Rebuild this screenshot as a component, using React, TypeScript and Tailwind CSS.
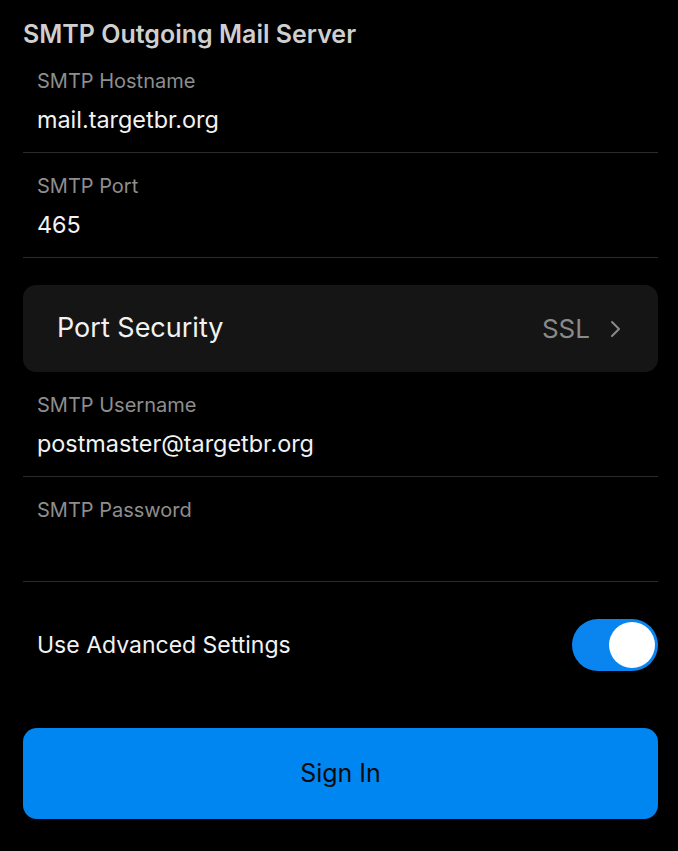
import { useState } from "react";

function Field({ label, value }: { label: string; value?: string }) {
  return (
    <div className="border-b border-[#2b2b2b] px-[14px] pt-[21px] pb-[18px]">
      <div className="text-[20px] leading-[24px] text-[#8e8e8e]">{label}</div>
      <div className="mt-[13px] h-[28px] text-[23.4px] leading-[28px] text-[#f2f2f2]">{value}</div>
    </div>
  );
}

export default function App() {
  const [advanced, setAdvanced] = useState(true);

  return (
    <div
      className="min-h-[851px] bg-black pt-[20px] pr-[20px] pb-8 pl-[23px]"
      style={{ fontFamily: "Inter, 'Noto Sans', sans-serif" }}
    >
      <h1 className="text-[25px] leading-[28px] font-semibold text-[#cfcfcf]">
        SMTP Outgoing Mail Server
      </h1>

      <Field label="SMTP Hostname" value="mail.targetbr.org" />
      <Field label="SMTP Port" value="465" />

      <button className="mt-[27px] flex h-[87px] w-full items-center justify-between rounded-[13px] bg-[#151515] pr-[36px] pl-[34px]">
        <span className="text-[27px] text-[#f2f2f2]">Port Security</span>
        <span className="flex items-center gap-[20px] text-[26px] text-[#8a8a8a]">
          SSL
          <svg width="12" height="18" viewBox="0 0 12 18" fill="none">
            <path d="M2 2l7 7-7 7" stroke="#8a8a8a" strokeWidth="2" strokeLinecap="round" strokeLinejoin="round" />
          </svg>
        </span>
      </button>

      <Field label="SMTP Username" value="postmaster@targetbr.org" />
      <Field label="SMTP Password" />

      <div className="flex items-center justify-between pt-[37px] pl-[14px]">
        <span className="text-[23px] text-[#f2f2f2]">Use Advanced Settings</span>
        <button
          onClick={() => setAdvanced(!advanced)}
          className={`flex h-[52px] w-[86px] items-center rounded-full p-[3px] ${
            advanced ? "justify-end bg-[#0a84ef]" : "justify-start bg-[#3a3a3c]"
          }`}
        >
          <span className="h-[46px] w-[46px] rounded-full bg-white" />
        </button>
      </div>

      <button className="mt-[57px] flex h-[91px] w-full items-center justify-center rounded-[14px] bg-[#0086f0] text-[25px] text-[#0b0b0b]">
        Sign In
      </button>
    </div>
  );
}
